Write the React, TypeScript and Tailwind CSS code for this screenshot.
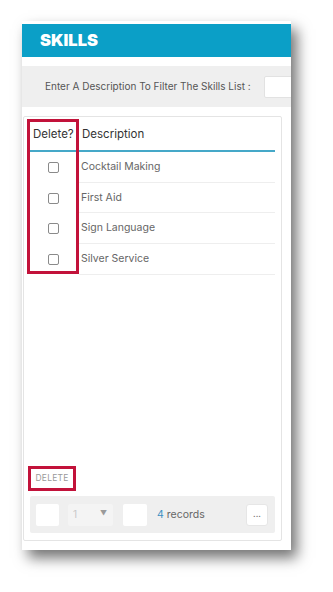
import React from "react";

const rows = ["Cocktail Making", "First Aid", "Sign Language", "Silver Service"];

export default function App() {
  return (
    <div
      className="w-[333px] h-[592px] bg-white pl-[22px] pt-[21px] overflow-hidden"
      style={{ fontFamily: "Inter, 'Noto Sans', sans-serif" }}
    >
      <div className="relative w-[269px] h-[529px] bg-white shadow-[6px_8px_13px_rgba(0,0,0,0.55)] flex flex-col overflow-hidden pt-[3px]">
        {/* Header */}
        <div className="h-[33px] bg-[#0b9fc7] flex items-center pl-[18px] shrink-0">
          <span className="text-white text-[16.5px] font-black leading-none">SKILLS</span>
        </div>
        {/* Filter bar */}
        <div className="mt-[9px] h-[41px] bg-[#efefef] flex items-center shrink-0">
          <span className="ml-[23px] text-[10px] text-[#555] whitespace-nowrap">
            Enter A Description To Filter The Skills List :
          </span>
          <div className="ml-[13px] w-[60px] h-[22px] bg-white border border-[#e2e2e2] rounded-[2px] shrink-0" />
        </div>
        {/* Inner card */}
        <div className="relative mt-[9px] ml-[1px] w-[259px] h-[425px] border border-[#e4e4e4] rounded-[2px] flex flex-col shrink-0">
          {/* table */}
          <div className="mx-[6px] flex flex-col">
            <div className="h-[35px] pt-[2px] flex items-center border-b-2 border-[#45a8c8]">
              <div className="w-[49px] pl-[3px] text-[11.5px] text-[#333]">Delete?</div>
              <div className="pl-[3px] text-[11.5px] text-[#333]">Description</div>
            </div>
            {rows.map((r) => (
              <div key={r} className="h-[30.7px] flex items-stretch">
                <div className="w-[49px] flex items-center justify-center pr-[2px]">
                  <div className="w-[11px] h-[11px] border border-[#8a8a8a] rounded-[2px] bg-white" />
                </div>
                <div className="flex-1 flex items-center pl-[2px] border-b border-[#eeeeee] text-[10.5px] text-[#666]">
                  {r}
                </div>
              </div>
            ))}
          </div>
          {/* red annotation */}
          <div className="absolute left-[3px] top-[2px] w-[52px] h-[155px] border-[3px] border-[#c2123a]" />
          <div className="flex-1" />
          {/* Delete button */}
          <div className="ml-[4px] w-[48px] h-[25px] border-[3px] border-[#c2123a] flex items-center justify-center">
            <span className="text-[8.5px] text-[#9a9a9a] tracking-[0.2px]">DELETE</span>
          </div>
          {/* pager */}
          <div className="mt-[5px] mb-[7px] mx-[6px] h-[37px] bg-[#efefef] rounded-[2px] flex items-center pl-[6px] pr-[7px]">
            <div className="w-[23px] h-[22px] bg-white rounded-[2px]" />
            <div className="ml-[9px] w-[45px] h-[22px] bg-[#f4f4f4] rounded-[2px] flex items-center pl-[5px] pr-[6px]">
              <span className="text-[10px] text-[#c8c8c8]">1</span>
              <span className="ml-auto text-[7px] text-[#9a9a9a]">▼</span>
            </div>
            <div className="ml-[10px] w-[24px] h-[22px] bg-white rounded-[2px]" />
            <span className="ml-[10px] text-[10.5px] text-[#666]">
              <span className="text-[#3d8fc2]">4</span> records
            </span>
            <div className="ml-auto w-[22px] h-[22px] bg-white border border-[#e6e6e6] rounded-[3px] flex items-center justify-center">
              <span className="text-[9px] text-[#777] leading-none -mt-[2px]">...</span>
            </div>
          </div>
        </div>
      </div>
    </div>
  );
}
